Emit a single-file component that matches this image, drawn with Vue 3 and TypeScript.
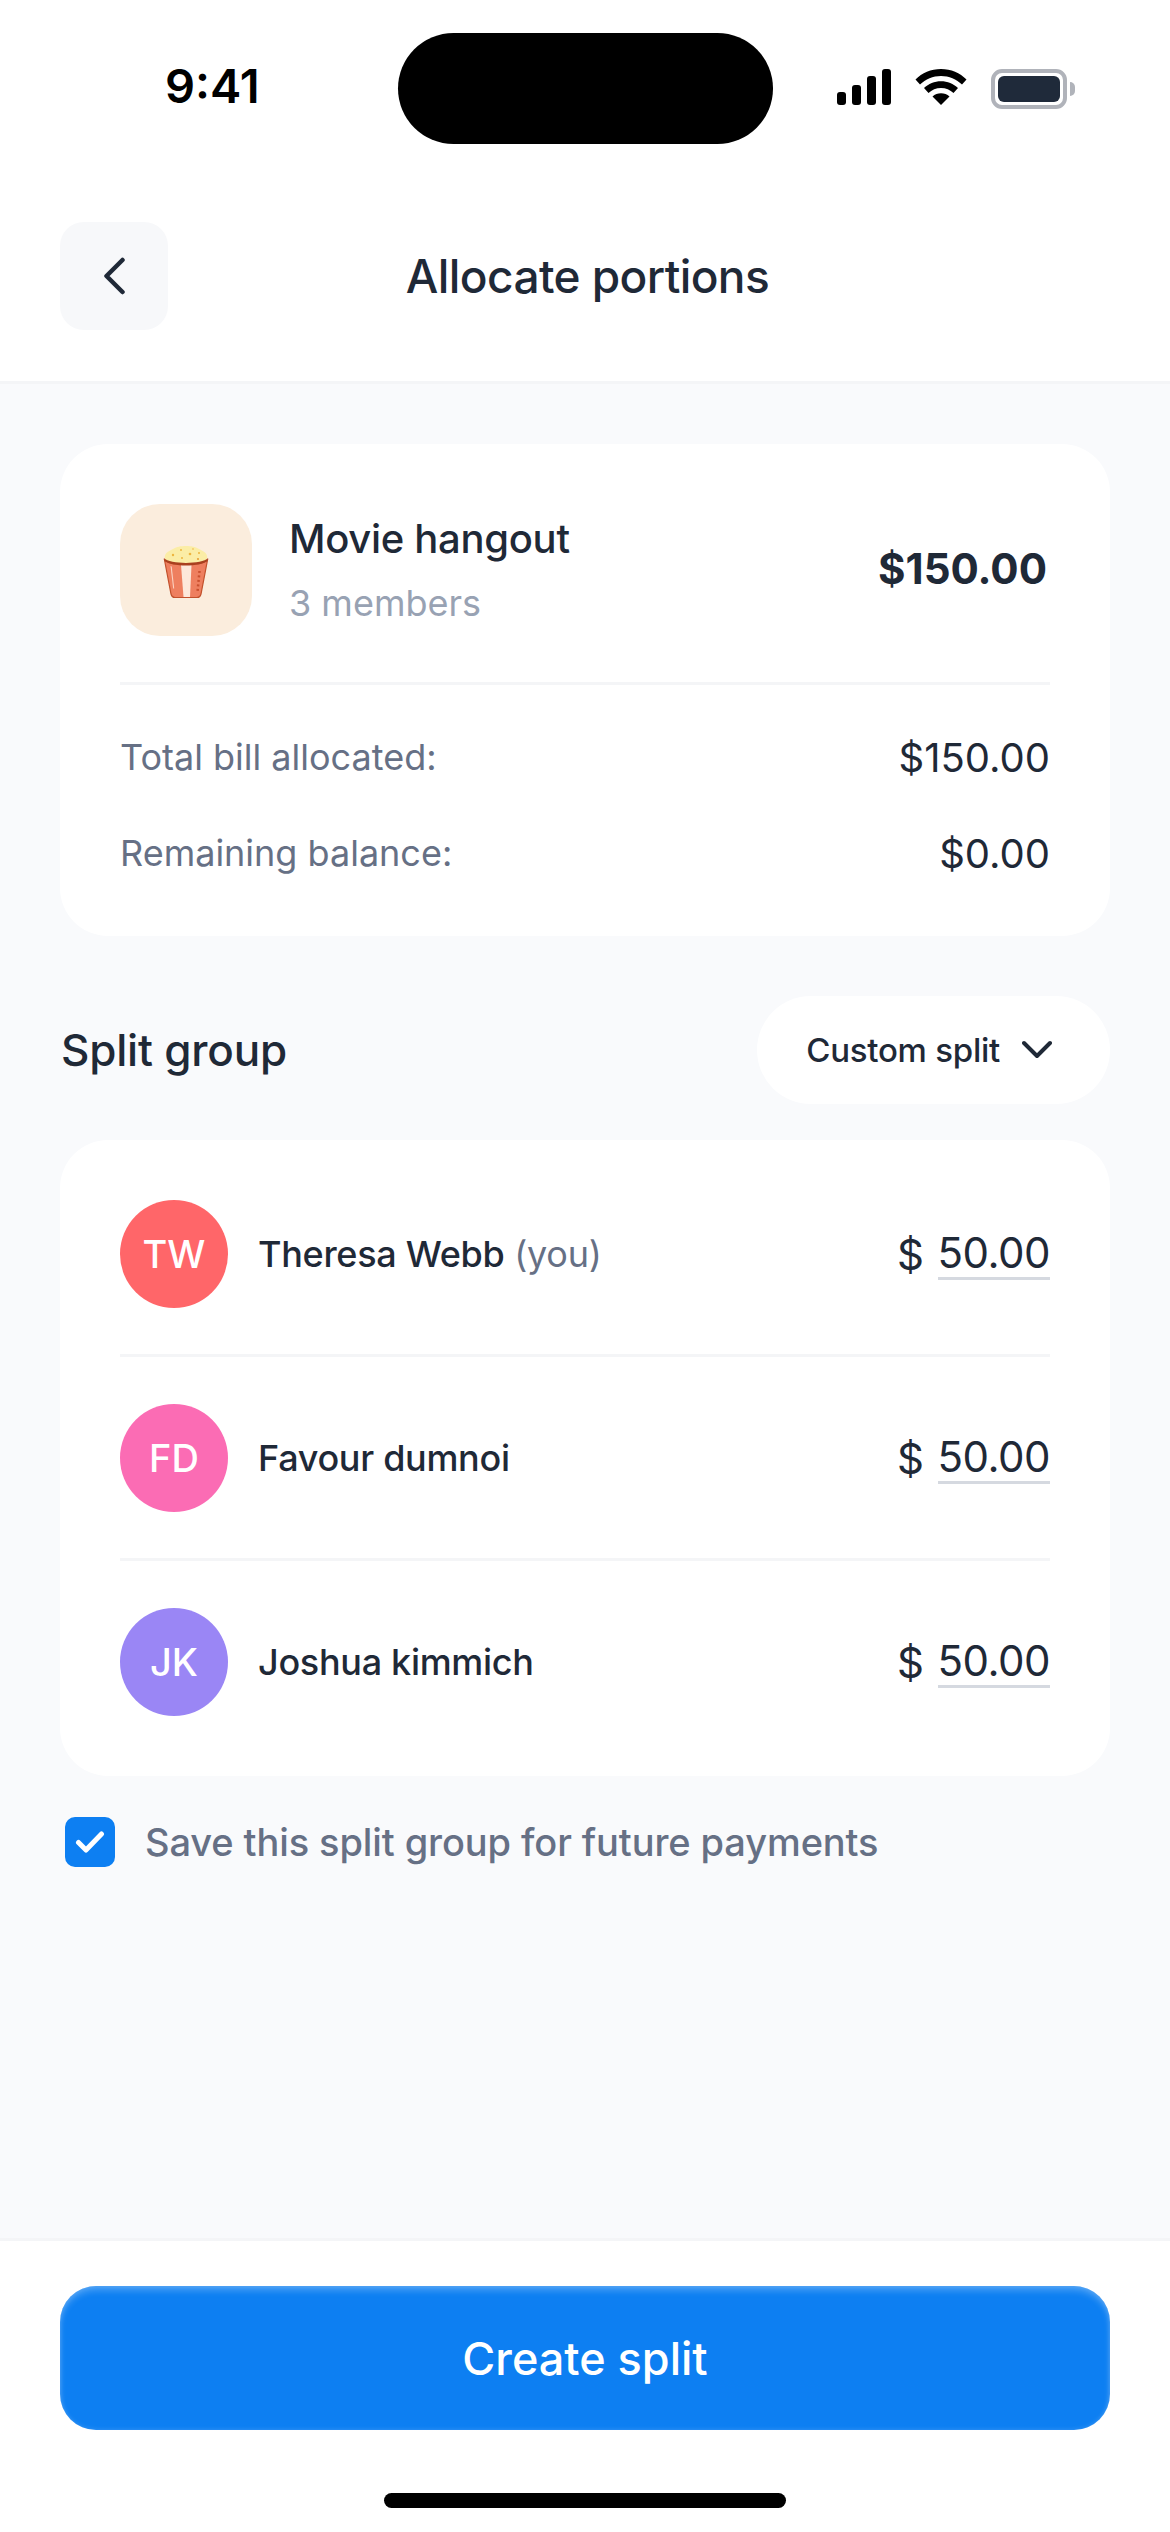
<script setup lang="ts">
interface Member {
	initials: string
	name: string
	you?: boolean
	color: string
	amount: string
}

const members: Member[] = [
	{ initials: 'TW', name: 'Theresa Webb', you: true, color: '#ff6669', amount: '50.00' },
	{ initials: 'FD', name: 'Favour dumnoi', color: '#fb6cb4', amount: '50.00' },
	{ initials: 'JK', name: 'Joshua kimmich', color: '#9a86f5', amount: '50.00' },
]

const summary = [
	{ label: 'Total bill allocated:', value: '$150.00' },
	{ label: 'Remaining balance:', value: '$0.00' },
]
</script>

<template>
	<div class="screen">
		<header class="top">
			<div class="status">
				<span class="time">9:41</span>
				<div class="island"></div>
				<div class="statusIcons">
					<svg width="54" height="36" viewBox="0 0 54 36">
						<rect x="0" y="23" width="9" height="13" rx="3" fill="#000" />
						<rect x="15" y="16" width="9" height="20" rx="3" fill="#000" />
						<rect x="30" y="7" width="9" height="29" rx="3" fill="#000" />
						<rect x="45" y="0" width="9" height="36" rx="3" fill="#000" />
					</svg>
					<svg width="52" height="36" viewBox="0 0 52 36">
						<path d="M0.5 10.500C7 4 16 0 26 0s19 4 25.500 10.500L47 15.500C41.500 10.300 34 7 26 7S10.500 10.300 5 15.500Z" fill="#000" />
						<path d="M9 19C13.500 14.800 19.500 12.200 26 12.200S38.500 14.800 43 19L38.500 24C35.200 20.900 30.800 19 26 19S16.800 20.900 13.500 24Z" fill="#000" />
						<path d="M17.500 27.500C19.800 25.500 22.800 24.300 26 24.300S32.200 25.500 34.500 27.500L26 36Z" fill="#000" />
					</svg>
					<div class="battery">
						<div class="batteryBody"><div class="batteryFill"></div></div>
						<div class="batteryCap"></div>
					</div>
				</div>
			</div>
			<div class="nav">
				<button class="back" type="button">
					<svg width="24" height="38" viewBox="0 0 24 38" fill="none">
						<path d="M20.500 3 4.500 19l16 16" stroke="#1f2937" stroke-width="4.500" stroke-linecap="round" stroke-linejoin="round" />
					</svg>
				</button>
				<h1 class="title">Allocate portions</h1>
			</div>
		</header>

		<main class="content">
			<section class="card billCard">
				<div class="billHead">
					<div class="billIcon">
						<svg width="46" height="54" viewBox="0 0 46 54">
							<path d="M1.500 15 8 49c.5 2 2 3.500 4 3.500h22c2 0 3.500-1.500 4-3.500l6.500-34C37 21 9 21 1.500 15Z" fill="#ee7f5f" stroke="#c2512c" stroke-width="1.200" />
							<path d="M18 20 28.500 20 27 52H20.500Z" fill="#fde8da" />
							<path d="M7.500 21l1.200.4 2.500 22h-1Z" fill="#fbd4c4" />
							<path d="M36.500 26 34.500 47" stroke="#c9502f" stroke-width="2.500" stroke-dasharray="2 2.500" />
							<path d="M2 14.500C0 7 9 5 11 3.500 15 0 31 0 35 3.500c2 1.500 11 3.500 9 11C38 20 8 20 2 14.500Z" fill="#fbeda6" />
							<path d="M1 13C7 19.500 39 19.500 45 13L44.500 16C37 22 9 22 1.500 16Z" fill="#a9401f" />
							<circle cx="10" cy="10" r="1.200" fill="#eeb53f" />
							<circle cx="18" cy="5" r="1" fill="#eeb53f" />
							<circle cx="27" cy="9" r="1.300" fill="#eeb53f" />
							<circle cx="36" cy="8" r="1" fill="#eeb53f" />
							<circle cx="19" cy="13" r="1" fill="#eeb53f" />
							<circle cx="35" cy="14" r="1.100" fill="#e7a23a" />
							<circle cx="30" cy="4" r=".8" fill="#eeb53f" />
						</svg>
					</div>
					<div class="billText">
						<span class="billName">Movie hangout</span>
						<span class="billMembers">3 members</span>
					</div>
					<span class="billTotal">$150.00</span>
				</div>
				<div class="summary">
					<div v-for="row in summary" :key="row.label" class="summaryRow">
						<span class="summaryLabel">{{ row.label }}</span>
						<span class="summaryValue">{{ row.value }}</span>
					</div>
				</div>
			</section>

			<div class="groupHead">
				<h2 class="groupTitle">Split group</h2>
				<button class="splitSelect" type="button">
					<span>Custom split</span>
					<svg width="30" height="20" viewBox="0 0 30 20" fill="none">
						<path d="M2 3l13 13L28 3" stroke="#1f2937" stroke-width="4" stroke-linecap="round" stroke-linejoin="round" />
					</svg>
				</button>
			</div>

			<section class="card memberCard">
				<div v-for="member in members" :key="member.initials" class="memberRow">
					<div class="avatar" :style="{ backgroundColor: member.color }">{{ member.initials }}</div>
					<span class="memberName">{{ member.name }}<span v-if="member.you" class="you"> (you)</span></span>
					<div class="amount">
						<span class="currency">$</span>
						<span class="amountValue">{{ member.amount }}</span>
					</div>
				</div>
			</section>

			<label class="saveRow">
				<span class="checkbox">
					<svg width="30" height="24" viewBox="0 0 30 24" fill="none">
						<path d="M3.500 12.500l7.500 7.500L26.500 4" stroke="#fff" stroke-width="5" stroke-linecap="round" stroke-linejoin="round" />
					</svg>
				</span>
				<span class="saveText">Save this split group for future payments</span>
			</label>
		</main>

		<footer class="bottom">
			<button class="create" type="button">Create split</button>
			<div class="homeBar"></div>
		</footer>
	</div>
</template>

<style>
	body {
		margin: 0;
		background: #ffffff;
	}
</style>

<style scoped>
	.screen {
		width: 1170px;
		height: 2532px;
		display: flex;
		flex-direction: column;
		background-color: #f9fafc;
		font-family: Inter, "Liberation Sans", sans-serif;
		color: #1f2937;
	}
	.top {
		flex-shrink: 0;
		height: 384px;
		background-color: #ffffff;
		border-bottom: 3px solid #f4f5f7;
		box-sizing: border-box;
	}
	.status {
		position: relative;
		height: 222px;
	}
	.time {
		position: absolute;
		left: 165px;
		top: 58px;
		font-size: 47px;
		line-height: 56px;
		font-weight: 600;
		color: #000000;
	}
	.island {
		position: absolute;
		left: 398px;
		top: 33px;
		width: 375px;
		height: 111px;
		border-radius: 56px;
		background-color: #000000;
	}
	.statusIcons {
		position: absolute;
		left: 837px;
		top: 69px;
		display: flex;
		align-items: flex-start;
		gap: 24px;
	}
	.battery {
		display: flex;
		align-items: center;
		gap: 3px;
	}
	.batteryBody {
		width: 76px;
		height: 40px;
		box-sizing: border-box;
		border: 4px solid #b0b3ba;
		border-radius: 11px;
		padding: 3px;
	}
	.batteryFill {
		width: 100%;
		height: 100%;
		border-radius: 6px;
		background-color: #1f2a3a;
	}
	.batteryCap {
		width: 5px;
		height: 14px;
		border-radius: 0 6px 6px 0;
		background-color: #b0b3ba;
	}
	.nav {
		position: relative;
		display: flex;
		align-items: center;
		justify-content: center;
		height: 108px;
	}
	.back {
		position: absolute;
		left: 60px;
		top: 0;
		width: 108px;
		height: 108px;
		display: flex;
		align-items: center;
		justify-content: center;
		padding: 0;
		border: none;
		border-radius: 24px;
		background-color: #f7f8fa;
	}
	.title {
		margin: 0 0 0 5px;
		font-size: 46px;
		line-height: 60px;
		font-weight: 500;
		letter-spacing: -0.6px;
	}
	.content {
		flex: 1;
		display: flex;
		flex-direction: column;
		padding: 60px 60px 0;
	}
	.card {
		background-color: #ffffff;
		border-radius: 48px;
	}
	.billCard {
		height: 492px;
		box-sizing: border-box;
		padding: 60px 60px 0;
	}
	.billHead {
		display: flex;
		align-items: center;
		height: 132px;
		padding-bottom: 46px;
		border-bottom: 3px solid #f4f5f7;
	}
	.billIcon {
		width: 132px;
		height: 132px;
		flex-shrink: 0;
		display: flex;
		align-items: center;
		justify-content: center;
		padding-top: 4px;
		box-sizing: border-box;
		border-radius: 40px;
		background-color: #fbeddd;
	}
	.billText {
		display: flex;
		flex-direction: column;
		gap: 17px;
		margin-left: 37px;
		flex: 1;
	}
	.billName {
		font-size: 40px;
		line-height: 48px;
		font-weight: 500;
		letter-spacing: -0.3px;
	}
	.billMembers {
		font-size: 36px;
		line-height: 46px;
		color: #98a2b3;
	}
	.billTotal {
		font-size: 42px;
		font-weight: 700;
		margin-right: 3px;
		padding-bottom: 3px;
	}
	.summary {
		display: flex;
		flex-direction: column;
		gap: 50px;
		margin-top: 49px;
	}
	.summaryRow {
		display: flex;
		justify-content: space-between;
		align-items: center;
		height: 46px;
	}
	.summaryLabel {
		font-size: 36px;
		color: #667085;
	}
	.summaryValue {
		font-size: 40px;
		font-weight: 400;
	}
	.groupHead {
		display: flex;
		justify-content: space-between;
		align-items: center;
		margin-top: 60px;
	}
	.groupTitle {
		margin: 0 0 0 1px;
		font-size: 44px;
		font-weight: 500;
		letter-spacing: -0.2px;
	}
	.splitSelect {
		display: flex;
		align-items: center;
		gap: 22px;
		height: 108px;
		padding: 0 58px 0 49px;
		border: none;
		border-radius: 54px;
		background-color: #ffffff;
		font-family: inherit;
		font-size: 33px;
		font-weight: 500;
		letter-spacing: -0.25px;
		color: #1f2937;
	}
	.memberCard {
		display: flex;
		flex-direction: column;
		margin-top: 36px;
		padding: 60px 60px;
	}
	.memberRow {
		display: flex;
		align-items: center;
		height: 108px;
	}
	.memberRow + .memberRow {
		margin-top: 96px;
		position: relative;
	}
	.memberRow + .memberRow::before {
		content: "";
		position: absolute;
		left: 0;
		right: 0;
		top: -50px;
		height: 3px;
		background-color: #f4f5f7;
	}
	.avatar {
		width: 108px;
		height: 108px;
		flex-shrink: 0;
		display: flex;
		align-items: center;
		justify-content: center;
		border-radius: 50%;
		color: #ffffff;
		font-size: 38px;
		font-weight: 500;
	}
	.memberName {
		flex: 1;
		margin-left: 30px;
		font-size: 36px;
		font-weight: 500;
		letter-spacing: -0.3px;
	}
	.you {
		font-weight: 400;
		color: #667085;
	}
	.amount {
		display: flex;
		align-items: center;
		gap: 14px;
		font-size: 42px;
		letter-spacing: -0.5px;
	}
	.amountValue {
		border-bottom: 3px solid #d5d9e0;
		line-height: 48px;
	}
	.saveRow {
		display: flex;
		align-items: center;
		gap: 30px;
		margin-top: 41px;
		padding-left: 5px;
	}
	.checkbox {
		width: 50px;
		height: 50px;
		flex-shrink: 0;
		display: flex;
		align-items: center;
		justify-content: center;
		border-radius: 10px;
		background-color: #0d7ff2;
	}
	.saveText {
		font-size: 38px;
		font-weight: 500;
		letter-spacing: -0.1px;
		color: #667085;
	}
	.bottom {
		flex-shrink: 0;
		height: 294px;
		box-sizing: border-box;
		position: relative;
		padding: 45px 60px 0;
		background-color: #ffffff;
		border-top: 3px solid #f4f5f7;
	}
	.create {
		width: 100%;
		height: 144px;
		border: none;
		border-radius: 36px;
		background-color: #0d7ff2;
		box-shadow: inset 0 5px 6px rgba(255, 255, 255, 0.22), inset 0 0 5px rgba(255, 255, 255, 0.18);
		color: #ffffff;
		font-family: inherit;
		font-size: 45px;
		font-weight: 500;
	}
	.homeBar {
		position: absolute;
		left: 384px;
		bottom: 24px;
		width: 402px;
		height: 15px;
		border-radius: 8px;
		background-color: #000000;
	}
</style>
